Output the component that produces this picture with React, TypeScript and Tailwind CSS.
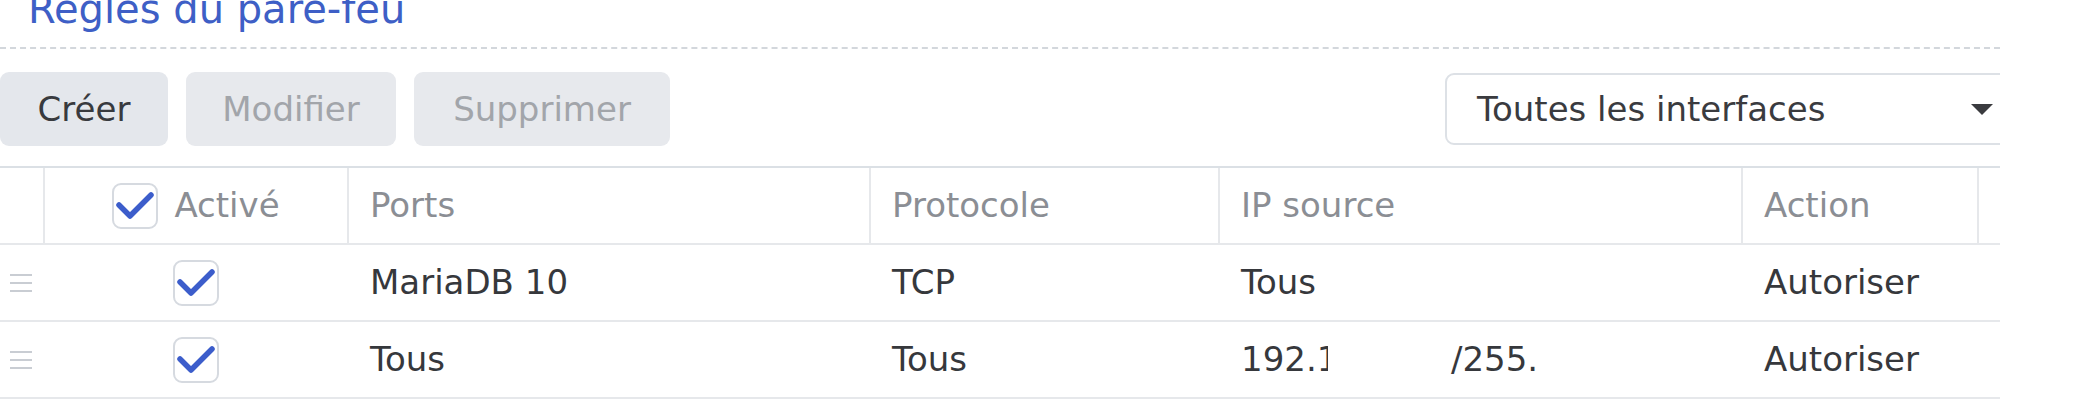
const CheckBox = () => (
  <div className="flex h-[46px] w-[46px] items-center justify-center rounded-[9px] border-2 border-[#d6dae0] bg-white">
    <svg width="38" height="30" viewBox="0 0 38 30" fill="none">
      <path d="M3 14 L14 25 L35 4" stroke="#3c5dcb" strokeWidth="5.5" strokeLinecap="round" strokeLinejoin="round" />
    </svg>
  </div>
)

const DragHandle = () => (
  <svg width="22" height="20" viewBox="0 0 22 20" fill="none">
    <path d="M0 2 H22 M0 10 H22 M0 18 H22" stroke="#c9cdd3" strokeWidth="2" />
  </svg>
)

const rows = [
  { ports: "MariaDB 10", proto: "TCP", ip: "Tous", action: "Autoriser", redacted: false },
  { ports: "Tous", proto: "Tous", ip: "", action: "Autoriser", redacted: true },
]

const App = () => {
  return (
    <div className="h-[418px] w-[2086px] overflow-hidden bg-white font-['DejaVu_Sans',sans-serif] text-[34px]">
      <div className="w-[2000px] overflow-hidden">
        {/* title, cut at the top */}
        <div className="h-[47px] overflow-hidden">
          <p className="-mt-[15px] pl-[28px] text-[40px] leading-[48px] text-[#3e5fc6]">Règles du pare-feu</p>
        </div>
        <div className="w-full border-t-2 border-dashed border-[#d3d7dc]"></div>

        {/* toolbar */}
        <div className="mt-[23px] flex h-[74px] w-[2010px] items-center justify-between">
          <div className="flex h-full gap-[18px]">
            <button className="flex h-full w-[168px] items-center justify-center rounded-[9px] bg-[#e4e7ec] text-[#383a3e]">Créer</button>
            <button className="flex h-full w-[210px] items-center justify-center rounded-[9px] bg-[#e7e9ed] text-[#a2a5aa]">Modifier</button>
            <button className="flex h-full w-[256px] items-center justify-center rounded-[9px] bg-[#e7e9ed] text-[#a2a5aa]">Supprimer</button>
          </div>
          <div className="flex h-[72px] w-[565px] items-center justify-between rounded-[9px] border-2 border-[#dde1e6] pl-[30px] pr-[15px] text-[#3a3b3f]">
            <span>Toutes les interfaces</span>
            <svg width="22" height="11" viewBox="0 0 22 11">
              <path d="M0 0 H22 L11 11 Z" fill="#3a3b3f" />
            </svg>
          </div>
        </div>

        {/* table */}
        <div className="mt-[20px] w-[2037px] border-t-2 border-[#dbe0e5]">
          <div className="grid h-[77px] grid-cols-[43px_304px_522px_349px_523px_236px_60px] border-b-2 border-[#e6e8eb] text-[#8b8e94]">
            <div></div>
            <div className="flex items-center justify-center gap-[16px] border-l-2 border-[#e6e8eb]">
              <CheckBox />
              <span>Activé</span>
            </div>
            <div className="flex items-center border-l-2 border-[#e6e8eb] pl-[21px]">Ports</div>
            <div className="flex items-center border-l-2 border-[#e6e8eb] pl-[21px]">Protocole</div>
            <div className="flex items-center border-l-2 border-[#e6e8eb] pl-[21px]">IP source</div>
            <div className="flex items-center border-l-2 border-[#e6e8eb] pl-[21px]">Action</div>
            <div className="border-l-2 border-[#e6e8eb]"></div>
          </div>
          {rows.map((r, i) => (
            <div key={i} className="grid h-[77px] grid-cols-[43px_304px_522px_349px_523px_236px_60px] border-b-2 border-[#e6e8eb] text-[#36383c]">
              <div className="flex items-center pl-[10px]">
                <DragHandle />
              </div>
              <div className="flex items-center justify-center border-l-2 border-transparent">
                <CheckBox />
              </div>
              <div className="flex items-center border-l-2 border-transparent pl-[21px]">{r.ports}</div>
              <div className="flex items-center border-l-2 border-transparent pl-[21px]">{r.proto}</div>
              <div className="flex items-center border-l-2 border-transparent pl-[21px] whitespace-nowrap">
                {r.redacted ? (
                  <>
                    <span className="w-[87px] overflow-hidden">192.1</span>
                    <span className="ml-[123px]">/255.</span>
                  </>
                ) : (
                  r.ip
                )}
              </div>
              <div className="flex items-center border-l-2 border-transparent pl-[21px]">{r.action}</div>
              <div></div>
            </div>
          ))}
        </div>
      </div>
    </div>
  )
}

export default App
